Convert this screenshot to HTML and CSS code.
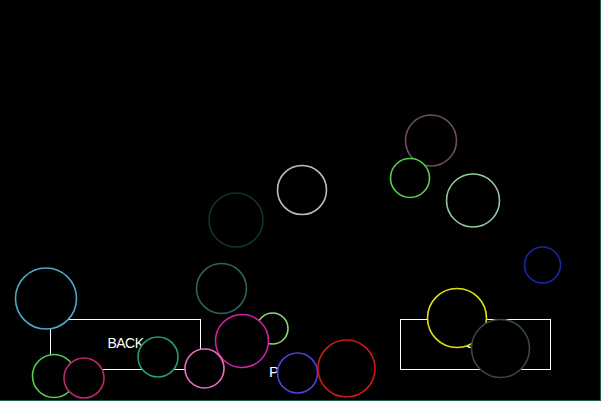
FILE: index.html
```html
<!DOCTYPE html>
<html lang="en">
<head>
  <meta charset="UTF-8" />
  <title>Bubbles</title>
  <link rel="stylesheet" href="styles.css">
</head>
<body>
  <div id="stage">
    <div class="btn btn-back">BACK</div>
    <div class="btn btn-next">GO</div>
    <div class="label-play">PLAY</div>

    <svg class="bubbles" width="600" height="400" viewBox="0 0 600 400">
      <circle cx="236" cy="220" r="27" stroke="#12302f" />
      <circle cx="302" cy="190" r="24.5" stroke="#b8c0b8" />
      <circle cx="431" cy="140.5" r="25.5" stroke="#704a68" />
      <circle cx="410" cy="178" r="19.5" stroke="#58d050" />
      <circle cx="473" cy="200.5" r="26.5" stroke="#90c8a0" />
      <circle cx="542.5" cy="265" r="18" stroke="#1828a8" />
      <circle cx="221.5" cy="288.5" r="25" stroke="#2e6262" />
      <circle cx="54" cy="376" r="21.5" stroke="#50d050" />
      <circle cx="84" cy="378" r="20" stroke="#c02870" />
      <circle cx="46" cy="298.5" r="30.5" stroke="#4fa8c8" />
      <circle cx="158" cy="357" r="20" stroke="#20a070" />
      <circle cx="272.5" cy="328.5" r="15.5" stroke="#90d878" />
      <circle cx="242" cy="341" r="26.5" stroke="#d020a8" />
      <circle cx="204.5" cy="368.5" r="19.5" stroke="#e870c0" />
      <circle cx="297.5" cy="373" r="20" stroke="#5040e0" />
      <circle cx="346.5" cy="368.5" r="28.5" stroke="#d01818" />
      <circle cx="457" cy="318" r="29.5" stroke="#e0e010" />
      <circle cx="500.5" cy="348.5" r="29" stroke="#384848" />
    </svg>
  </div>
</body>
</html>
```

FILE: styles.css
```css
body {
  margin: 0;
  background-color: #1d5e48;
  font-family: "Liberation Sans", Arial, sans-serif;
}

#stage {
  position: relative;
  width: 600px;
  height: 400px;
  background-color: black;
  overflow: hidden;
}

.btn {
  position: absolute;
  top: 319px;
  width: 149px;
  height: 45px;
  padding-bottom: 4px;
  border: 1px solid white;
  color: white;
  font-size: 14px;
  letter-spacing: -0.5px;
  display: flex;
  align-items: center;
  justify-content: center;
}

.btn-back {
  left: 50px;
}

.btn-next {
  left: 400px;
}

.label-play {
  position: absolute;
  left: 269px;
  top: 363px;
  color: white;
  font-size: 15px;
}

.bubbles {
  position: absolute;
  top: 0;
  left: 0;
}

.bubbles circle {
  fill: black;
  stroke-width: 1.6;
}
```
